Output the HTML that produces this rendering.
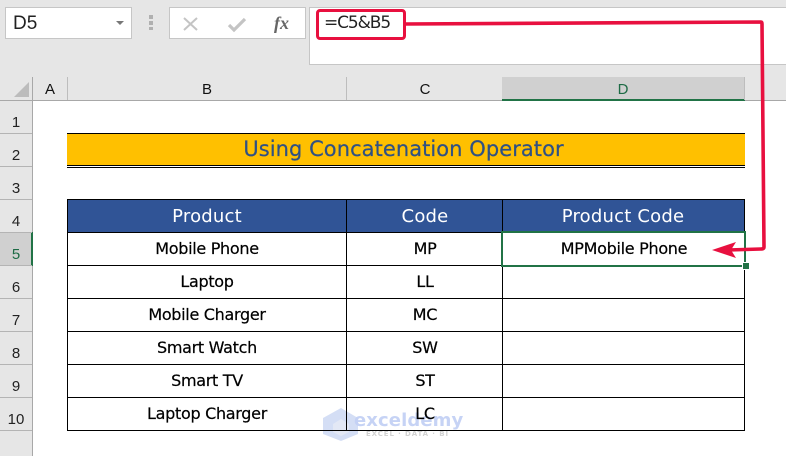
<!DOCTYPE html>
<html>
<head>
<meta charset="utf-8">
<style>
html,body{margin:0;padding:0}
body{width:786px;height:456px;overflow:hidden;position:relative;background:#fff;font-family:"DejaVu Sans","Liberation Sans",sans-serif}
div{position:absolute;box-sizing:border-box}
.t{white-space:nowrap;text-align:center;color:#000;transform:translateX(-50%)}
.c{font-size:16px;line-height:20px;letter-spacing:-.3px;-webkit-text-stroke:.2px #000}
.h{font-size:18px;line-height:22px;color:#fff;letter-spacing:.2px}
.rn{left:0;width:32px;text-align:center;font-size:15px;line-height:18px;color:#222;font-family:"Liberation Sans",sans-serif}
.rl{left:0;width:32px;height:1px;background:#b4b4b4}
.bk{background:#000}
.hd{font-family:"Liberation Sans",sans-serif;font-size:15px;line-height:18px;top:81px;color:#111;transform:translateX(-50%)}
</style>
</head>
<body>
<!-- Chrome background -->
<div style="left:0;top:0;width:786px;height:100px;background:#e6e6e6"></div>
<div style="left:0;top:100px;width:32px;height:356px;background:#e6e6e6"></div>
<div style="left:5px;top:7px;width:127px;height:32px;background:#fff;border:1px solid #c6c6c6"></div>
<div style="left:13px;top:13px;font:19px/22px 'Liberation Sans',sans-serif;color:#222">D5</div>
<div style="left:116px;top:21px;width:0;height:0;border-left:4px solid transparent;border-right:4px solid transparent;border-top:4px solid #777"></div>
<div style="left:149px;top:15px;width:4px;height:4px;background:#b0b0b0"></div>
<div style="left:149px;top:21px;width:4px;height:4px;background:#b0b0b0"></div>
<div style="left:149px;top:27px;width:4px;height:3px;background:#b0b0b0"></div>
<div style="left:169px;top:7px;width:137px;height:32px;background:#fff;border:1px solid #c6c6c6"></div>
<svg style="position:absolute;left:180px;top:14px" width="70" height="20" viewBox="0 0 70 20">
<path d="M4 4 L17 16 M17 4 L4 16" stroke="#c4c4c4" stroke-width="2" fill="none"/>
<path d="M49 11 L54 16 L65 5" stroke="#c4c4c4" stroke-width="3.2" fill="none"/>
</svg>
<div style="left:274px;top:12px;font:italic 700 18px/22px 'Liberation Serif',serif;color:#666">fx</div>
<div style="left:309px;top:7px;width:477px;height:58px;background:#fff;border:1px solid #c6c6c6;border-right:0"></div>
<div style="left:324px;top:12px;font-size:17px;line-height:22px;color:#222;letter-spacing:-1.1px">=C5&amp;B5</div>

<!-- Column headers -->
<div style="left:0;top:100px;width:786px;height:1px;background:#a8a8a8"></div>
<div style="left:32px;top:77px;width:1px;height:379px;background:#a8a8a8"></div>
<div style="left:67px;top:77px;width:1px;height:23px;background:#bdbdbd"></div>
<div style="left:346px;top:77px;width:1px;height:23px;background:#bdbdbd"></div>
<div style="left:502px;top:77px;width:243px;height:24px;background:#d0d0d0;border-bottom:2px solid #217346"></div>
<div style="left:744px;top:77px;width:1px;height:23px;background:#bdbdbd"></div>
<svg style="position:absolute;left:12px;top:80px" width="18" height="18"><path d="M17 2V17H2Z" fill="#bcbcbc"/></svg>
<div class="hd" style="left:50px">A</div>
<div class="hd" style="left:207px">B</div>
<div class="hd" style="left:425px">C</div>
<div class="hd" style="left:623px;color:#1d6b45">D</div>

<!-- Row headers -->
<div style="left:0;top:232px;width:32px;height:34px;background:#d0d0d0"></div>
<div style="left:31px;top:232px;width:2px;height:34px;background:#217346"></div>
<div class="rl" style="top:133px"></div><div class="rl" style="top:166px"></div>
<div class="rl" style="top:199px"></div><div class="rl" style="top:232px"></div>
<div class="rl" style="top:265px"></div><div class="rl" style="top:298px"></div>
<div class="rl" style="top:331px"></div><div class="rl" style="top:364px"></div>
<div class="rl" style="top:397px"></div><div class="rl" style="top:430px"></div>
<div class="rn" style="top:114px">1</div>
<div class="rn" style="top:147px">2</div>
<div class="rn" style="top:180px">3</div>
<div class="rn" style="top:213px">4</div>
<div class="rn" style="top:246px;color:#1d6b45">5</div>
<div class="rn" style="top:279px">6</div>
<div class="rn" style="top:312px">7</div>
<div class="rn" style="top:345px">8</div>
<div class="rn" style="top:378px">9</div>
<div class="rn" style="top:411px">10</div>

<!-- Title -->
<div style="left:67px;top:133px;width:678px;height:32px;background:#ffc000"></div>
<div class="bk" style="left:67px;top:133px;width:678px;height:1px"></div>
<div class="bk" style="left:67px;top:165px;width:678px;height:1px"></div>
<div class="bk" style="left:67px;top:167px;width:678px;height:1px"></div>
<div class="t" style="left:403.5px;top:136px;font-size:21px;line-height:26px;color:#2f5184;letter-spacing:.05px;-webkit-text-stroke:.2px #2f5184">Using Concatenation Operator</div>

<!-- Watermark (under table text) -->
<svg style="position:absolute;left:320px;top:406px" width="42" height="36" viewBox="0 0 42 36">
<path d="M21 2 L38 12 V28 L21 35 L3 28 V12Z" fill="#c9d6f2" opacity=".8"/>
<path d="M21 13 L29 18 V26 L21 30 L13 26 V18Z" fill="#e3e8f5"/>
</svg>
<div style="left:354px;top:409px;font:700 18px/24px 'DejaVu Sans',sans-serif;color:#c4d1f5;letter-spacing:.1px;opacity:.95">exceldemy</div>
<div style="left:366px;top:430px;font:700 7px/9px 'DejaVu Sans',sans-serif;color:#d2d2d2;letter-spacing:.9px;white-space:nowrap">EXCEL · DATA · BI</div>

<!-- Table -->
<div style="left:67px;top:199px;width:678px;height:33px;background:#305496"></div>
<div class="bk" style="left:67px;top:199px;width:678px;height:1px"></div>
<div class="bk" style="left:67px;top:232px;width:678px;height:1px"></div>
<div class="bk" style="left:67px;top:265px;width:678px;height:1px"></div>
<div class="bk" style="left:67px;top:298px;width:678px;height:1px"></div>
<div class="bk" style="left:67px;top:331px;width:678px;height:1px"></div>
<div class="bk" style="left:67px;top:364px;width:678px;height:1px"></div>
<div class="bk" style="left:67px;top:397px;width:678px;height:1px"></div>
<div class="bk" style="left:67px;top:430px;width:678px;height:1px"></div>
<div class="bk" style="left:67px;top:199px;width:1px;height:232px"></div>
<div class="bk" style="left:346px;top:199px;width:1px;height:232px"></div>
<div class="bk" style="left:502px;top:199px;width:1px;height:232px"></div>
<div class="bk" style="left:744px;top:199px;width:1px;height:232px"></div>

<div class="t h" style="left:207px;top:206px">Product</div>
<div class="t h" style="left:425px;top:206px">Code</div>
<div class="t h" style="left:623px;top:206px">Product Code</div>

<div class="t c" style="left:207px;top:239px">Mobile Phone</div>
<div class="t c" style="left:207px;top:272px">Laptop</div>
<div class="t c" style="left:207px;top:305px">Mobile Charger</div>
<div class="t c" style="left:207px;top:338px">Smart Watch</div>
<div class="t c" style="left:207px;top:371px">Smart TV</div>
<div class="t c" style="left:207px;top:404px">Laptop Charger</div>
<div class="t c" style="left:425px;top:239px">MP</div>
<div class="t c" style="left:425px;top:272px">LL</div>
<div class="t c" style="left:425px;top:305px">MC</div>
<div class="t c" style="left:425px;top:338px">SW</div>
<div class="t c" style="left:425px;top:371px">ST</div>
<div class="t c" style="left:425px;top:404px">LC</div>

<!-- Selected cell -->
<div style="left:501px;top:231px;width:245px;height:36px;border:2px solid #217346"></div>
<div style="left:743px;top:263px;width:6px;height:6px;background:#217346;border:1px solid #fff;box-sizing:content-box;margin:-1px"></div>
<div class="t c" style="left:624px;top:239px">MPMobile Phone</div>

<!-- Red annotations -->
<div style="left:316px;top:9px;width:90px;height:31px;border:3px solid #e8103f;border-radius:4px"></div>
<svg style="position:absolute;left:0;top:0" width="786" height="456" viewBox="0 0 786 456">
<path d="M405 24 L761 22 Q762 22 762 24 L764 247 Q764 249 761 249 L728 250" fill="none" stroke="#e8103f" stroke-width="3.6"/>
<path d="M712 250 L736 242 L731 250 L736 258Z" fill="#e8103f"/>
</svg>
</body>
</html>
